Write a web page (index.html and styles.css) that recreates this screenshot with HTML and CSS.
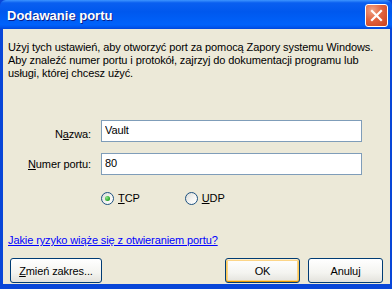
FILE: index.html
```html
<!DOCTYPE html>
<html lang="pl">
  <head>
    <meta charset="UTF-8" />
    <title>Dodawanie portu</title>
    <link rel="stylesheet" href="styles.css">
  </head>
  <body>
    <div class="window">
      <div class="title-bar">
        <span class="title-text">Dodawanie portu</span>
        <button class="close-button" type="button" aria-label="Zamknij">
          <svg width="13" height="13" viewBox="0 0 13 13">
            <path d="M2 2 L11 11 M11 2 L2 11" stroke="#fff" stroke-width="2.2" stroke-linecap="square" />
          </svg>
        </button>
      </div>
      <div class="content">
        <p class="intro">
          Użyj tych ustawień, aby otworzyć port za pomocą Zapory systemu Windows.<br />
          Aby znaleźć numer portu i protokół, zajrzyj do dokumentacji programu lub<br />
          usługi, której chcesz użyć.
        </p>

        <div class="field field-name">
          <label class="field-label" for="name">N<u>a</u>zwa:</label>
          <input class="text-input" id="name" type="text" value="Vault" />
        </div>
        <div class="field field-port">
          <label class="field-label" for="port"><u>N</u>umer portu:</label>
          <input class="text-input" id="port" type="text" value="80" />
        </div>

        <div class="protocols">
          <label class="radio">
            <span class="radio-dot checked"></span>
            <span><u>T</u>CP</span>
          </label>
          <label class="radio">
            <span class="radio-dot"></span>
            <span><u>U</u>DP</span>
          </label>
        </div>

        <a class="help-link" href="#">Jakie ryzyko wiąże się z otwieraniem portu?</a>

        <div class="buttons">
          <button class="xp-button scope-button" type="button"><u>Z</u>mień zakres...</button>
          <button class="xp-button ok-button" type="button">OK</button>
          <button class="xp-button cancel-button" type="button">Anuluj</button>
        </div>
      </div>
    </div>
  </body>
</html>
```

FILE: styles.css
```css
* {
  box-sizing: border-box;
}
body {
  margin: 0;
  font-family: "Liberation Sans", Arial, sans-serif;
  font-size: 11px;
  letter-spacing: -0.1px;
  color: #000;
  background: #ece9d8;
}

.window {
  width: 392px;
  height: 289px;
  overflow: hidden;
  display: flex;
  flex-direction: column;
  background: #0846d8;
}

.title-bar {
  height: 29px;
  flex: none;
  display: flex;
  align-items: center;
  justify-content: space-between;
  padding: 0 4px 0 7px;
  background: linear-gradient(
    #3d95ff 0,
    #0a5ff0 10%,
    #0058ee 40%,
    #0062fb 85%,
    #0058f0 92%,
    #0047dc 100%
  );
  border-radius: 6px 6px 0 0;
}

.title-text {
  color: #fff;
  font-weight: bold;
  font-size: 13px;
  letter-spacing: 0;
  text-shadow: 1px 1px #0a1f8a;
  margin-top: 1px;
}

.close-button {
  all: unset;
  width: 21px;
  height: 21px;
  display: flex;
  align-items: center;
  justify-content: center;
  border: 1px solid #fff;
  border-radius: 3px;
  background: radial-gradient(circle at 30% 25%, #f0a486 0, #e2643f 45%, #c9401c 100%);
  margin-top: 2px;
}

.content {
  flex: 1;
  margin: 0 2px 5px 3px;
  background: #ece9d8;
  padding: 12px 7px 0 5px;
  display: flex;
  flex-direction: column;
}

.intro {
  margin: 0;
  line-height: 13px;
}

.field {
  display: flex;
  align-items: flex-start;
  gap: 10px;
}

.field-name {
  margin-top: 40px;
}

.field-port {
  margin-top: 11px;
}

.field-label {
  width: 83px;
  text-align: right;
  line-height: 13px;
}

.field-name .field-label {
  margin-top: 8px;
}

.field-port .field-label {
  margin-top: 5px;
}

.text-input {
  width: 261px;
  height: 22px;
  border: 1px solid #7f9db9;
  padding: 1px 3px 3px;
  font-family: inherit;
  font-size: 11px;
  letter-spacing: inherit;
  background: #fff;
  outline: none;
}

.protocols {
  margin-top: 17px;
  margin-left: 93px;
  display: flex;
  gap: 45px;
  line-height: 13px;
}

.radio {
  display: flex;
  align-items: center;
  gap: 4px;
}

.radio-dot {
  width: 13px;
  height: 13px;
  border-radius: 50%;
  border: 1px solid #1c5180;
  background: linear-gradient(135deg, #dcdcd7 0, #f6f6f4 60%, #fff 100%);
  display: flex;
  align-items: center;
  justify-content: center;
}

.radio-dot.checked::after {
  content: "";
  width: 5px;
  height: 5px;
  border-radius: 50%;
  background: radial-gradient(circle at 35% 35%, #8ee68e 0, #21a121 70%);
}

.help-link {
  margin-top: 29px;
  line-height: 13px;
  color: #0000ff;
  align-self: flex-start;
}

.buttons {
  margin-top: 11px;
  display: flex;
  padding-left: 2px;
}

.xp-button {
  all: unset;
  height: 23px;
  display: flex;
  align-items: center;
  justify-content: center;
  border: 1px solid #003c74;
  border-radius: 3px;
  background: linear-gradient(#fff 0, #f4f4f0 60%, #e3e2dc 100%);
  font-family: inherit;
  font-size: 11px;
  color: #000;
}

.scope-button {
  width: 90px;
}

.ok-button {
  width: 73px;
  margin-left: auto;
  box-shadow: inset 0 1px #ffeecb, inset 0 -1px #e59700, inset 1px 0 #fbca5c, inset -1px 0 #fbca5c, inset 0 0 0 2px #fcd587;
}

.cancel-button {
  width: 73px;
  margin-left: 8px;
}
```
